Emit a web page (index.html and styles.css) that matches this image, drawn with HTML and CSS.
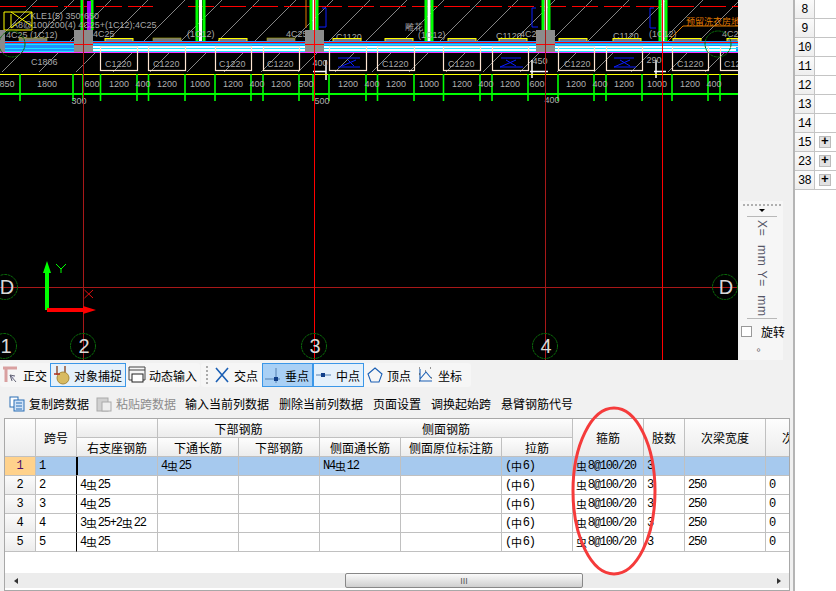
FILE: index.html
```html
<!DOCTYPE html>
<html lang="zh">
<head>
<meta charset="utf-8">
<title>梁平法表格</title>
<link rel="stylesheet" href="styles.css">
</head>
<body>
<div class="app">
  <div class="main">
    <div class="top">
      <svg class="cad" width="738" height="360" viewBox="0 0 738 360">
        <defs>
          <pattern id="hatch" patternUnits="userSpaceOnUse" width="37" height="37">
            <path d="M-1 38L38 -1" class="hatch-line"/>
          </pattern>
        </defs>
        <rect class="hatch-fill" x="0" y="0" width="738" height="72"/>
        <path class="red dash" d="M0 6.5H153M188 6.5H738"/>
        <!-- column strips -->
        <path class="green thick" d="M82 0V30M92 0V30M197 0V41M204 0V41M311 0V30M317 0V30M426 0V41M432 0V41M543 0V30M549 0V30M660 0V41M666 0V41"/>
        <path class="white" d="M200.500 0V41M429 0V41M314 0V30M546 0V30M663 0V41"/>
        <rect class="magenta-fill" x="87" y="1" width="4" height="29"/>
        <!-- top labels -->
        <g class="cad-text">
          <text x="30" y="19">KLE1(5) 350*650</text>
          <text x="12" y="28">A8@100/200(4) 4C25+(1C12);4C25</text>
          <text x="6" y="38">4C25 (1C12)</text>
          <text x="93" y="37">4C25</text>
          <text x="187" y="37">(1C12)</text>
          <text x="286" y="37">4C25</text>
          <text x="418" y="38">(1C12)</text>
          <text x="496" y="39">C1120</text>
          <text x="520" y="37">4C25</text>
          <text x="613" y="39">C1120</text>
          <text x="649" y="37">(1C12)</text>
          <text x="336" y="40">C1120</text>
          <text x="722" y="37">4C25</text>
          <text x="405" y="30">雕花</text>
        </g>
        <text class="orange-text" x="686" y="25">预留洗衣房地</text>
        <path class="orange" d="M683 26H738M683 26L668 41M306 0V28"/>
        <path class="yellow" d="M4 12H32V30H4ZM11 12L32 26M32 12L11 28M11 14V28"/>
        <!-- slabs -->
        <g class="slab-grey">
          <rect x="19" y="38" width="28" height="4"/><rect x="153" y="38" width="28" height="4"/><rect x="267" y="38" width="28" height="4"/>
        </g>
        <g class="slab">
          <rect x="105" y="38.500" width="28" height="4"/><rect x="219" y="38.500" width="28" height="4"/><rect x="333" y="38.500" width="28" height="4"/><rect x="385" y="38.500" width="28" height="4"/><rect x="448" y="38.500" width="28" height="4"/><rect x="499" y="38.500" width="28" height="4"/><rect x="559" y="38.500" width="28" height="4"/><rect x="613" y="38.500" width="28" height="4"/><rect x="673" y="38.500" width="28" height="4"/><rect x="727" y="38.500" width="11" height="4"/>
        </g>
        <!-- beam bands -->
        <rect class="band-blue" x="0" y="41" width="738" height="12"/>
        <rect class="band-white" x="93" y="46" width="643" height="5"/>
        <path class="cyan" d="M0 44.500H738M0 48.500H738M0 51.500H738"/>
        <path class="magenta" d="M0 52.500H738"/>
        <path class="red" d="M0 42.500H738"/>
        <g class="col-grey">
          <rect x="0" y="30" width="5" height="22"/><rect x="74" y="30" width="19" height="22"/><rect x="305" y="30" width="19" height="22"/><rect x="536" y="30" width="19" height="22"/>
        </g>
        <path class="red" d="M74 44.500H93M305 44.500H324M536 44.500H555"/>
        <!-- windows -->
        <g class="win">
          <rect x="100.500" y="46.500" width="37" height="24"/><rect x="148.500" y="46.500" width="37" height="24"/><rect x="215.500" y="46.500" width="36" height="24"/><rect x="263.500" y="46.500" width="36" height="24"/><rect x="329.500" y="46.500" width="37" height="24"/><rect x="377.500" y="46.500" width="37" height="24"/><rect x="443.500" y="46.500" width="37" height="24"/><rect x="492.500" y="46.500" width="36" height="24"/><rect x="558.500" y="46.500" width="36" height="24"/><rect x="606.500" y="46.500" width="36" height="24"/><rect x="672.500" y="46.500" width="36" height="24"/><rect x="720.500" y="46.500" width="20" height="24"/>
        </g>
        <g class="cad-text">
          <text x="31" y="65">C1806</text><text x="105" y="67">C1220</text><text x="153" y="67">C1220</text><text x="219" y="67">C1220</text><text x="267" y="67">C1220</text><text x="382" y="67">C1220</text><text x="448" y="67">C1220</text><text x="564" y="67">C1220</text><text x="677" y="67">C1220</text><text x="724" y="67">C12</text>
        </g>
        <path class="blue" d="M338 58H360M342 66L356 60M338 67H360M348 60L354 66M501 58H521M500 67L516 60M500 67H523M506 60L516 66M614 58H634M614 67L630 60M614 67H636M620 60L630 66"/>
        <path class="blue" d="M322 8H326V27H319M536 8H532V27H538M654 8H650V28H656"/>
        <path class="white2" d="M313 71.500H326M326 60V80M530 71.500H548M532 60V78M654 71.500H666M656 60V78"/>
        <!-- dimension lines -->
        <path class="yellow-line" d="M0 74.500H738"/>
        <path class="green-line" d="M0 94H738"/>
        <path class="green-v" d="M20 74V101M73 74V101M83 74V101M100.500 74V101M137 74V101M148.500 74V101M185 74V101M215 74V101M251 74V101M263 74V101M299 74V101M313 74V101M329 74V101M366 74V101M377.500 74V101M414 74V101M443.500 74V101M480 74V101M492 74V101M528 74V101M558 74V101M594 74V101M606 74V101M642 74V101M672 74V101M708 74V101M720 74V101"/>
        <g class="dim">
          <text x="7" y="87">850</text><text x="47" y="87">1800</text><text x="92" y="87">600</text><text x="119" y="87">1200</text><text x="143" y="87">400</text><text x="167" y="87">1200</text><text x="200" y="87">1000</text><text x="233" y="87">1200</text><text x="257" y="87">400</text><text x="281" y="87">1200</text><text x="306" y="87">500</text><text x="348" y="87">1200</text><text x="372" y="87">400</text><text x="396" y="87">1200</text><text x="429" y="87">1000</text><text x="462" y="87">1200</text><text x="486" y="87">400</text><text x="510" y="87">1200</text><text x="537" y="87">600</text><text x="576" y="87">1200</text><text x="600" y="87">400</text><text x="624" y="87">1200</text><text x="657" y="87">1000</text><text x="690" y="87">1200</text><text x="714" y="87">400</text>
          <text x="79" y="104">300</text><text x="322" y="104">500</text><text x="552" y="103">400</text><text x="320" y="66">400</text><text x="540" y="64">450</text><text x="654" y="63">290</text>
        </g>
        <!-- axis lines -->
        <path class="axis-dim" d="M0 287.500H738M83.500 0V360M545.500 0V360"/>
        <path class="axis" d="M314.500 0V360M662.500 0V360"/>
        <!-- axis bubbles -->
        <g class="bubble">
          <circle cx="5" cy="287" r="12.500"/><circle cx="725" cy="287" r="12.500"/><circle cx="4" cy="346" r="12.500"/><circle cx="83" cy="346" r="12.500"/><circle cx="314" cy="346" r="12.500"/><circle cx="545" cy="346" r="12.500"/>
          <circle cx="12" cy="44" r="13"/><circle cx="718" cy="44" r="13"/>
        </g>
        <g class="bubble-text">
          <text x="7" y="294">D</text><text x="726" y="294">D</text><text x="6" y="353">1</text><text x="84" y="353">2</text><text x="315" y="353">3</text><text x="546" y="353">4</text>
        </g>
        <!-- UCS -->
        <path class="ucs-g" d="M47 310V270"/>
        <path class="ucs-gf" d="M47 261L51 273H43Z"/>
        <path class="ucs-r" d="M47 310H86"/>
        <path class="ucs-rf" d="M83 306L96 310L83 314Z"/>
        <path class="ucs-y" d="M56 264L61 269L66 264M61 269V273"/>
        <path class="ucs-x" d="M84.500 290L93 298M93 290L84.500 298"/>
      </svg>
      <div class="side">
        <div class="float">
          <div class="grip"></div>
          <div class="caret"></div>
          <div class="vert">X= &nbsp;mm Y= &nbsp;mm</div>
          <label class="rot"><span class="check"></span><span>旋转</span></label>
          <div class="deg">°</div>
        </div>
      </div>
    </div>

    <div class="bar1">
      <div class="group">
        <div class="tool">
          <svg width="18" height="20" viewBox="0 0 18 20"><path class="i-pink" d="M1 3H15M4 3V17"/><path class="i-grey" d="M8 10L14 17M10 16L8 10L13 11"/></svg>
          <span>正交</span>
        </div>
        <div class="tool on">
          <svg width="18" height="20" viewBox="0 0 18 20"><path class="i-brown" d="M4 1V10M12 1V10"/><circle class="i-hand" cx="10" cy="13" r="6"/><path class="i-red" d="M1 9H7"/></svg>
          <span>对象捕捉</span>
        </div>
        <div class="tool">
          <svg width="18" height="20" viewBox="0 0 18 20"><path class="i-dark" d="M1 2H17M1 5H17M1 2V15H17V2"/><rect class="i-white" x="4" y="9" width="11" height="8"/></svg>
          <span>动态输入</span>
        </div>
      </div>
      <div class="group snap">
        <div class="dots"></div>
        <div class="tool">
          <svg width="16" height="18" viewBox="0 0 16 18"><path class="i-blue" d="M2 2L14 16M14 2L2 16"/></svg>
          <span>交点</span>
        </div>
        <div class="tool on strong">
          <svg width="17" height="18" viewBox="0 0 17 18"><path class="i-line" d="M1 13H16M12 2V17"/><rect class="i-node" x="10" y="11" width="4" height="4"/></svg>
          <span>垂点</span>
        </div>
        <div class="tool on">
          <svg width="17" height="18" viewBox="0 0 17 18"><path class="i-line" d="M1 9H16"/><rect class="i-node" x="6" y="7" width="4" height="4"/></svg>
          <span>中点</span>
        </div>
        <div class="tool">
          <svg width="16" height="18" viewBox="0 0 16 18"><path class="i-blue-thin" d="M8 2L15 8L12 16H4L1 8Z"/></svg>
          <span>顶点</span>
        </div>
        <div class="tool">
          <svg width="17" height="18" viewBox="0 0 17 18"><path class="i-blue-thin" d="M3 3V15H15M3 13L9 6L14 12"/><path class="i-dots" d="M2 2H4M2 8H4M2 15H4M13 2H15M8 5H10M14 12H16"/></svg>
          <span>坐标</span>
        </div>
      </div>
    </div>

    <div class="bar2">
      <div class="act">
        <svg width="16" height="16" viewBox="0 0 16 16"><rect class="i-doc" x="1" y="1" width="8" height="10"/><rect class="i-doc2" x="5" y="4" width="10" height="11"/><path class="i-docline" d="M7 7H13M7 10H13M7 13H13"/></svg>
        <span>复制跨数据</span>
      </div>
      <div class="act off">
        <svg width="16" height="16" viewBox="0 0 16 16"><rect class="i-clip" x="1" y="2" width="11" height="13"/><rect class="i-clip2" x="6" y="6" width="9" height="9"/></svg>
        <span>粘贴跨数据</span>
      </div>
      <div class="act"><span>输入当前列数据</span></div>
      <div class="act"><span>删除当前列数据</span></div>
      <div class="act"><span>页面设置</span></div>
      <div class="act"><span>调换起始跨</span></div>
      <div class="act"><span>悬臂钢筋代号</span></div>
    </div>

    <div class="grid">
      <div class="view">
        <table class="sheet">
          <colgroup>
            <col class="c31"><col class="c41"><col class="c81"><col class="c81"><col class="c81"><col class="c81"><col class="c101"><col class="c71"><col class="c71"><col class="c41"><col class="c81"><col class="c81">
          </colgroup>
          <thead>
            <tr>
              <th rowspan="2"></th><th rowspan="2">跨号</th><th></th><th colspan="2">下部钢筋</th><th colspan="3">侧面钢筋</th><th rowspan="2">箍筋</th><th rowspan="2">肢数</th><th rowspan="2">次梁宽度</th><th rowspan="2">次梁高度</th>
            </tr>
            <tr>
              <th>右支座钢筋</th><th>下通长筋</th><th>下部钢筋</th><th>侧面通长筋</th><th>侧面原位标注筋</th><th>拉筋</th>
            </tr>
          </thead>
          <tbody>
            <tr class="sel">
              <th class="rh">1</th><td class="frz">1</td><td class="frz2"></td><td>4<i>虫</i>25</td><td></td><td>N4<i>虫</i>12</td><td></td><td>(<i>中</i>6)</td><td><i>虫</i>8@100/20</td><td>3</td><td></td><td></td>
            </tr>
            <tr>
              <th class="rh">2</th><td class="frz">2</td><td>4<i>虫</i>25</td><td></td><td></td><td></td><td></td><td>(<i>中</i>6)</td><td><i>虫</i>8@100/20</td><td>3</td><td>250</td><td>0</td>
            </tr>
            <tr>
              <th class="rh">3</th><td class="frz">3</td><td>4<i>虫</i>25</td><td></td><td></td><td></td><td></td><td>(<i>中</i>6)</td><td><i>虫</i>8@100/20</td><td>3</td><td>250</td><td>0</td>
            </tr>
            <tr>
              <th class="rh">4</th><td class="frz">4</td><td>3<i>虫</i>25+2<i>虫</i>22</td><td></td><td></td><td></td><td></td><td>(<i>中</i>6)</td><td><i>虫</i>8@100/20</td><td>3</td><td>250</td><td>0</td>
            </tr>
            <tr>
              <th class="rh">5</th><td class="frz">5</td><td>4<i>虫</i>25</td><td></td><td></td><td></td><td></td><td>(<i>中</i>6)</td><td><i>虫</i>8@100/20</td><td>3</td><td>250</td><td>0</td>
            </tr>
          </tbody>
        </table>
      </div>
      <div class="hscroll">
        <span class="arrow-l"></span>
        <div class="thumb"><span class="thumb-grip">III</span></div>
        <span class="arrow-r"></span>
      </div>
      <svg class="ring" width="90" height="174" viewBox="0 0 90 174"><ellipse cx="44" cy="87" rx="41" ry="83"/></svg>
    </div>
  </div>

  <div class="list">
    <div class="li"><span class="num">8</span></div>
    <div class="li"><span class="num">9</span></div>
    <div class="li"><span class="num">10</span></div>
    <div class="li"><span class="num">11</span></div>
    <div class="li"><span class="num">12</span></div>
    <div class="li"><span class="num">13</span></div>
    <div class="li"><span class="num">14</span></div>
    <div class="li"><span class="num">15</span><span class="plus">+</span></div>
    <div class="li"><span class="num">23</span><span class="plus">+</span></div>
    <div class="li"><span class="num">38</span><span class="plus">+</span></div>
  </div>
</div>
</body>
</html>
```
FILE: styles.css
```css
* { box-sizing: border-box; }
html, body { margin: 0; padding: 0; }
body {
  width: 836px;
  height: 591px;
  overflow: hidden;
  background: #f0f0f0;
  font: 12px "Noto Sans CJK SC", "Liberation Sans", sans-serif;
  color: #000;
}
.app { display: flex; width: 836px; height: 591px; }
.main { width: 793px; height: 591px; display: flex; flex-direction: column; position: relative; }

/* drawing */
.top { display: flex; height: 360px; flex: none; }
.cad { display: block; background: #000; flex: none; }
.hatch-line { stroke: #bdbdbd; stroke-width: .7; fill: none; }
.hatch-fill { fill: url(#hatch); }
.red { stroke: #f00; stroke-width: 1; fill: none; }
.dash { stroke-dasharray: 26 6; }
.green { stroke: #0f0; fill: none; }
.thick { stroke-width: 3; }
.white { stroke: #fff; stroke-width: 3; fill: none; }
.magenta-fill { fill: #a0f; }
.cad-text text { fill: #a8a8a8; font: 9px "Liberation Sans", sans-serif; }
.orange-text { fill: #e07a00; font: 9px "Noto Sans CJK SC", sans-serif; }
.orange { stroke: #e07a00; fill: none; }
.yellow { stroke: #ff0; fill: none; }
.slab-grey rect { fill: #7a7a7a; stroke: #aa0; stroke-width: .6; }
.slab rect { fill: #7a7a7a; stroke: #ff0; }
.band-blue { fill: #1e90ff; }
.band-white { fill: #fff; }
.cyan { stroke: #19e5ff; fill: none; }
.magenta { stroke: #ff30ff; fill: none; }
.col-grey rect { fill: #8c8c8c; }
.win rect { fill: none; stroke: #ffe6d2; stroke-width: 1.2; }
.blue { stroke: #0b1cff; fill: none; }
.white2 { stroke: #fff; stroke-width: 1.5; fill: none; }
.yellow-line { stroke: #ff0; fill: none; }
.green-line { stroke: #0f0; stroke-width: 2; fill: none; }
.green-v { stroke: #0f0; stroke-width: 1.6; fill: none; }
.dim text { fill: #b0b0b0; font: 9px "Liberation Sans", sans-serif; text-anchor: middle; }
.axis-dim { stroke: #a81818; fill: none; }
.axis { stroke: #f00; fill: none; }
.bubble circle { fill: none; stroke: #0a6a0a; stroke-dasharray: 3 .6; }
.bubble-text text { fill: #d8d8d8; font: 20px "Liberation Sans", sans-serif; text-anchor: middle; }
.ucs-g { stroke: #0f0; stroke-width: 4; fill: none; }
.ucs-gf { fill: #0f0; }
.ucs-r { stroke: #f00; stroke-width: 4; fill: none; }
.ucs-rf { fill: #f00; }
.ucs-y { stroke: #0f0; fill: none; }
.ucs-x { stroke: #e01010; fill: none; }

/* side floater */
.side { flex: none; width: 55px; height: 360px; padding: 8px 10px 0 2px; display: flex; align-items: flex-end; }
.float { width: 43px; height: 159px; background: #f6f6f6; display: flex; flex-direction: column; align-items: center; position: relative; }
.grip { width: 38px; border-top: 2px dotted #b0b0b0; margin-top: 3px; }
.caret { width: 0; height: 0; margin-top: 3px; border: 3px solid transparent; border-top: 3px solid #000; border-bottom: 0; }
.vert {
  writing-mode: vertical-rl;
  width: 30px;
  height: 103px;
  margin-top: 4px;
  border-top: 1px solid #b8b8b8;
  border-bottom: 1px solid #b8b8b8;
  padding-top: 3px;
  font: 12px/30px "Liberation Sans", sans-serif;
  color: #556;
  letter-spacing: .8px;
  white-space: nowrap;
  overflow: hidden;
}
.rot { display: flex; align-items: center; gap: 9px; width: 43px; margin-top: 4px; white-space: nowrap; }
.check { width: 11px; height: 11px; border: 1px solid #999; background: #fff; margin-left: 1px; flex: none; }
.deg { font-size: 11px; line-height: 12px; margin-top: 6px; margin-right: 6px; color: #555; }

/* toolbars */
.bar1 { height: 27px; padding: 3px 0 0 0; display: flex; gap: 1px; align-items: flex-start; background: #f1f1f1; flex: none; }
.group { display: flex; align-items: center; height: 24px; background: #f6f6f6; border-radius: 3px; }
.snap { padding-right: 5px; }
.tool { display: flex; align-items: center; gap: 3px; height: 24px; padding: 0 3px 0 2px; white-space: nowrap; }
.tool svg { display: block; flex: none; }
.snap .tool { gap: 4px; padding: 0 4px 0 2px; }
.on { background: #e5f1fb; border: 1px solid #3b97e8; }
.snap .on { width: 51px; padding: 0 0 0 1px; }
.snap .on + .tool:not(.on) { padding-left: 3px; }
.strong { background: #a9d0f5; }
.dots { width: 2px; height: 18px; border-left: 2px dotted #aaa; margin: 0 4px 0 5px; }
.i-pink { stroke: #d9a0a0; stroke-width: 3; fill: none; }
.i-grey { stroke: #667; fill: #dde; }
.i-brown { stroke: #8a4a2a; stroke-width: 1.4; fill: none; }
.i-hand { fill: #d8bb62; stroke: #a88a3a; }
.i-red { stroke: #b03020; stroke-width: 1.5; fill: none; }
.i-dark { stroke: #444; fill: none; }
.i-white { fill: #fff; stroke: #222; }
.i-blue { stroke: #1a5fb4; stroke-width: 1.6; fill: none; }
.i-blue-thin { stroke: #1a5fb4; stroke-width: 1.1; fill: none; }
.i-line { stroke: #5580b0; fill: none; }
.i-node { fill: #12408a; }
.i-dots { stroke: #333; stroke-width: 1; stroke-dasharray: 1 1; fill: none; }

.bar2 { height: 31px; padding: 2px 0 0 9px; display: flex; align-items: center; gap: 10px; white-space: nowrap; background: #f1f1f1; flex: none; }
.act { display: flex; align-items: center; gap: 4px; }
.act svg { display: block; flex: none; }
.off { color: #8c8c8c; margin: 0 -1px 0 -3px; }
.i-doc { fill: #fff; stroke: #2a6fb5; }
.i-doc2 { fill: #cfe2f7; stroke: #2a6fb5; }
.i-docline { stroke: #2a6fb5; fill: none; }
.i-clip { fill: #d0d0d0; stroke: #aaa; }
.i-clip2 { fill: #eee; stroke: #aaa; }

/* grid */
.grid {
  margin-left: 4px;
  width: 786px;
  height: 173px;
  border: 1px solid #a8a8a8;
  background: #fff;
  display: flex;
  flex-direction: column;
  position: relative;
  flex: none;
}
.view { height: 154px; overflow: hidden; flex: none; }
.sheet { table-layout: fixed; width: 842px; border-collapse: separate; border-spacing: 0; }
.c31 { width: 31px; } .c41 { width: 41px; } .c71 { width: 71px; } .c81 { width: 81px; } .c101 { width: 101px; }
.sheet th, .sheet td {
  height: 19px;
  padding: 0;
  border-right: 1px solid #c0c0c0;
  border-bottom: 1px solid #c0c0c0;
  font-weight: 400;
  overflow: hidden;
  white-space: nowrap;
}
.sheet thead th { background: linear-gradient(#fdfdfd, #ececec); text-align: center; font-size: 12px; line-height: 15px; }
.sheet td { padding: 1px 0 0 3px; font: 12px/15px "Liberation Mono", monospace; letter-spacing: -1.2px; }
.sheet td i { font: normal 11px/12px "Noto Sans CJK SC", sans-serif; letter-spacing: .8px; vertical-align: top; display: inline-block; height: 15px; padding-top: 1px; }
.sheet .rh { background: linear-gradient(#fbfbfb, #ececec); padding-top: 1px; font: 12px/15px "Liberation Mono", monospace; text-align: center; }
.sheet .frz { border-right: 1px solid #000; }
.sel td { background: #a6c9ee; }
.sheet .sel .rh { background: #ffd28c; color: #50106a; }
.frz2 { box-shadow: inset 1px 0 0 #000; }
.hscroll { height: 15px; background: #ececec; display: flex; align-items: center; position: relative; }
.thumb {
  width: 238px;
  height: 15px;
  margin-left: 327px;
  border: 1px solid #888;
  border-radius: 2px;
  background: linear-gradient(#fafafa, #cfcfcf);
  display: flex;
  align-items: center;
  justify-content: center;
}
.thumb-grip { font: 9px "Liberation Sans", sans-serif; color: #555; }
.arrow-l { width: 0; height: 0; margin-left: 9px; border: 3px solid transparent; border-left: 0; border-right: 4px solid #333; }
.arrow-r { width: 0; height: 0; margin-left: 194px; border: 3px solid transparent; border-right: 0; border-left: 4px solid #333; }
.ring { position: absolute; left: 565px; top: -15px; overflow: visible; }
.ring ellipse { fill: none; stroke: #f53b3b; stroke-width: 3; }

/* right list */
.list { width: 43px; height: 591px; background: #fff; border-left: 2px solid #b5b5b5; display: flex; flex-direction: column; }
.li { height: 19px; display: flex; align-items: center; gap: 4px; flex: none; border-bottom: 1px solid #c4c4c4; }
.num { width: 20px; height: 18px; background: linear-gradient(#fafafa, #eee); border-right: 1px solid #c4c4c4; text-align: center; font: 12px/20px "Liberation Mono", monospace; letter-spacing: -.6px; }
.plus { width: 12px; height: 12px; background: #e2e2e2; border: 1px solid #bbb; font: 700 13px/10px "Liberation Mono", monospace; text-align: center; }
```
